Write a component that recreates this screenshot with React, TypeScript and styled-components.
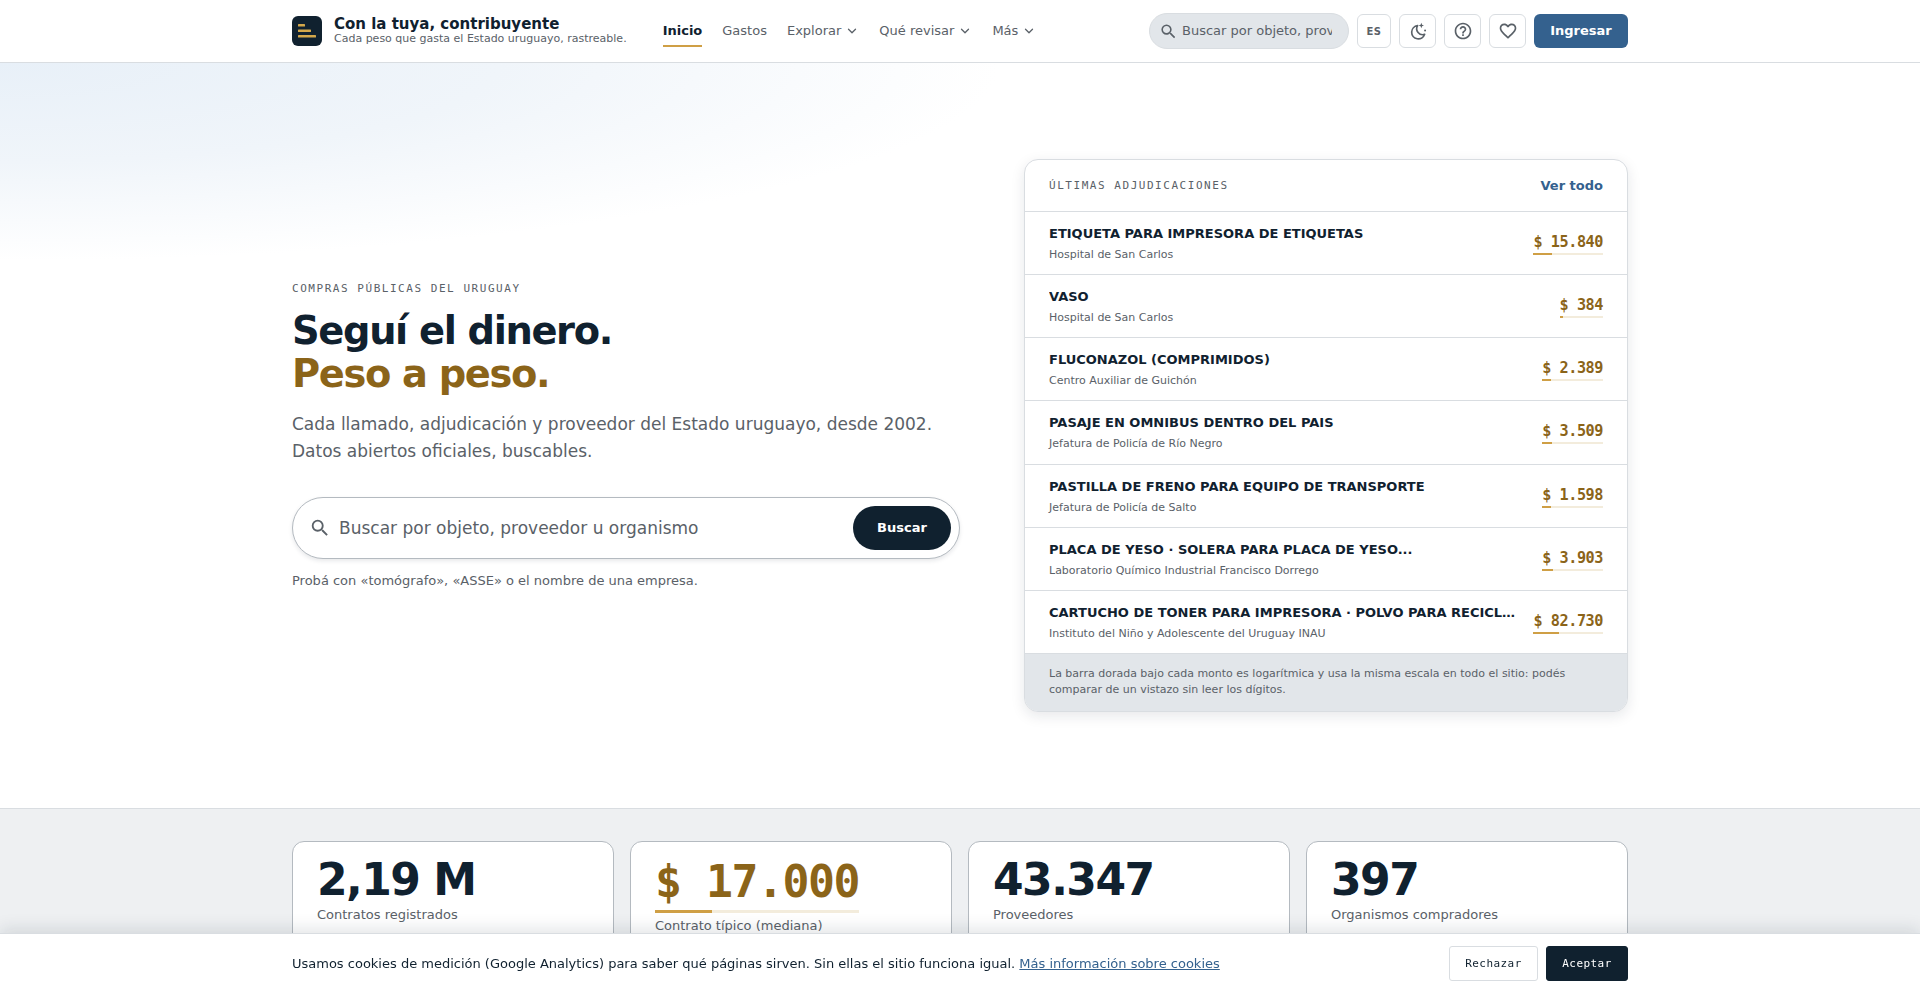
import React from "react";
import styled, { createGlobalStyle } from "styled-components";
import { ChevronDown } from "lucide-react";
import { MdSearch, MdHelpOutline, MdFavoriteBorder } from "react-icons/md";

const sans = `"DejaVu Sans", sans-serif`;
const mono = `"DejaVu Sans Mono", monospace`;
const ink = "#10212f";
const gold = "#8b6419";
const goldBar = "#cf9f45";
const goldTrack = "#f3ecdc";
const muted = "#5a6168";
const line = "#d9dde1";

const Global = createGlobalStyle`
  html, body { margin: 0; padding: 0; background: #fff; }
  body { font-family: ${sans}; color: ${ink}; }
  * { box-sizing: border-box; }
`;

const Header = styled.header`
  height: 63px;
  border-bottom: 1px solid ${line};
  background: #fff;
`;
const HeaderInner = styled.div`
  width: 1336px;
  height: 62px;
  margin: 0 auto;
  display: flex;
  align-items: center;
`;
const Brand = styled.div`
  display: flex;
  align-items: center;
  gap: 12px;
  margin-right: 36px;
`;
const LogoMark = styled.div`
  width: 30px;
  height: 30px;
  border-radius: 6px;
  background: ${ink};
  display: flex;
`;
const BrandText = styled.div`
  display: flex;
  flex-direction: column;
  padding-bottom: 1px;
`;
const BrandTitle = styled.span`
  font-size: 15px;
  font-weight: 700;
  line-height: 16px;
`;
const BrandSub = styled.span`
  font-size: 11px;
  line-height: 13px;
  color: ${muted};
`;
const Nav = styled.nav`
  display: flex;
  align-items: stretch;
  height: 62px;
  gap: 20px;
`;
const NavItem = styled.a<{ $active?: boolean }>`
  display: flex;
  align-items: center;
  gap: 4px;
  font-size: 13px;
  font-weight: ${(p) => (p.$active ? 700 : 400)};
  color: ${(p) => (p.$active ? ink : muted)};
  padding-bottom: 1px;
  position: relative;
  &::after {
    content: "";
    display: ${(p) => (p.$active ? "block" : "none")};
    position: absolute;
    left: 0;
    right: 0;
    top: 45px;
    height: 2px;
    background: ${goldBar};
  }
`;
const Tools = styled.div`
  margin-left: auto;
  display: flex;
  align-items: center;
  gap: 8px;
`;
const TopSearch = styled.div`
  width: 200px;
  height: 36px;
  border-radius: 18px;
  background: #e2e6ea;
  border: 1px solid #d9dde1;
  display: flex;
  align-items: center;
  gap: 4px;
  padding: 0 16px 0 9px;
  font-size: 13px;
  color: ${muted};
  overflow: hidden;
  white-space: nowrap;
`;
const Clip = styled.span`
  overflow: hidden;
  flex: 1;
  padding-bottom: 1px;
`;
const ToolButton = styled.button<{ $w?: number }>`
  width: ${(p) => p.$w ?? 37}px;
  height: 34px;
  padding: 0;
  border: 1px solid ${line};
  border-radius: 6px;
  background: #fff;
  color: ${muted};
  font-family: ${sans};
  font-size: 10px;
  font-weight: 700;
  letter-spacing: 0.5px;
  display: flex;
  align-items: center;
  justify-content: center;
`;
const LoginButton = styled.button`
  width: 94px;
  height: 34px;
  padding: 0 0 1px;
  border: 0;
  border-radius: 6px;
  background: #34618e;
  color: #fff;
  font-family: ${sans};
  font-size: 13px;
  font-weight: 700;
`;

const Hero = styled.section`
  height: 745px;
  background: radial-gradient(ellipse 1000px 198px at 0 0, #e8f0f8 0%, #f0f5fa 50%, rgba(255, 255, 255, 0) 100%), #fff;
  display: flex;
  align-items: center;
`;
const HeroGrid = styled.div`
  width: 1336px;
  margin: 0 auto;
  display: grid;
  grid-template-columns: 668px 604px;
  gap: 64px;
  align-items: center;
`;
const HeroLeft = styled.div`
  display: flex;
  flex-direction: column;
`;
const Eyebrow = styled.div`
  font-family: ${mono};
  font-size: 11px;
  letter-spacing: 0.14em;
  line-height: 16px;
  color: ${muted};
`;
const Headline = styled.h1`
  margin: 12px 0 0;
  font-size: 38.4px;
  font-weight: 700;
  letter-spacing: -0.035em;
  line-height: 43px;
  color: ${ink};
`;
const HeadlineGold = styled.span`
  display: block;
  color: ${gold};
`;
const Lead = styled.p`
  margin: 16px 0 0;
  font-size: 17px;
  line-height: 27px;
  color: ${muted};
`;
const BigSearch = styled.div`
  margin-top: 32px;
  height: 62px;
  width: 668px;
  border: 1px solid #b4bac0;
  border-radius: 31px;
  background: #fff;
  box-shadow: 0 2px 4px rgba(16, 33, 47, 0.1);
  display: flex;
  align-items: center;
  padding: 0 8px 0 16px;
  gap: 8px;
  font-size: 17px;
  color: ${muted};
`;
const BigPlaceholder = styled.span`
  flex: 1;
`;
const BigButton = styled.button`
  width: 98px;
  height: 44px;
  border: 0;
  border-radius: 22px;
  background: ${ink};
  color: #fff;
  font-family: ${sans};
  font-size: 13px;
  font-weight: 700;
`;
const Hint = styled.p`
  margin: 13px 0 0;
  font-size: 13px;
  line-height: 18px;
  color: ${muted};
`;

const Panel = styled.div`
  border: 1px solid ${line};
  border-radius: 14px;
  background: #fff;
  box-shadow: 0 4px 14px rgba(16, 33, 47, 0.1);
  overflow: hidden;
`;
const PanelHead = styled.div`
  height: 52px;
  padding: 0 24px;
  border-bottom: 1px solid ${line};
  display: flex;
  align-items: center;
  justify-content: space-between;
`;
const MoreLink = styled.a`
  font-size: 13px;
  font-weight: 700;
  color: #34618e;
`;
const Row = styled.div`
  height: 63.15px;
  padding: 2px 24px 0;
  border-bottom: 1px solid ${line};
  display: flex;
  align-items: center;
  justify-content: space-between;
  gap: 16px;
`;
const RowMain = styled.div`
  flex: 1;
  min-width: 0;
  display: flex;
  flex-direction: column;
  gap: 6px;
`;
const RowTitle = styled.div`
  font-size: 13px;
  font-weight: 700;
  line-height: 16px;
  color: ${ink};
  white-space: nowrap;
  overflow: hidden;
  text-overflow: ellipsis;
`;
const RowSub = styled.div`
  font-size: 11px;
  line-height: 14px;
  color: ${muted};
`;
const Amount = styled.div`
  flex: none;
  display: inline-flex;
  flex-direction: column;
  gap: 2px;
`;
const AmountText = styled.span`
  font-family: ${mono};
  font-size: 15.2px;
  font-weight: 700;
  letter-spacing: -0.03em;
  line-height: 18px;
  color: ${gold};
`;
const Track = styled.div<{ $h: number }>`
  height: ${(p) => p.$h}px;
  background: ${goldTrack};
`;
const Fill = styled.div`
  height: 100%;
  background: ${goldBar};
`;
const PanelNote = styled.div`
  background: #e2e6ea;
  padding: 12px 24px 13px;
  font-size: 11px;
  line-height: 16px;
  color: ${muted};
`;

const Stats = styled.section`
  background: #eef0f2;
  border-top: 1px solid ${line};
  padding: 32px 0 48px;
`;
const StatsGrid = styled.div`
  width: 1336px;
  margin: 0 auto;
  display: grid;
  grid-template-columns: repeat(4, 1fr);
  gap: 16px;
  align-items: start;
`;
const StatCard = styled.div`
  border: 1px solid #b4bac0;
  border-radius: 12px;
  background: #fff;
  padding: 13px 24px 16px;
  min-height: 110px;
`;
const StatValue = styled.div`
  font-size: 44px;
  font-weight: 700;
  letter-spacing: -0.035em;
  line-height: 50px;
  color: ${ink};
`;
const StatMoney = styled.div`
  display: inline-flex;
  flex-direction: column;
  gap: 3px;
  margin-top: 2px;
`;
const StatMoneyText = styled.span`
  font-family: ${mono};
  font-size: 44.8px;
  font-weight: 700;
  letter-spacing: -0.033em;
  line-height: 50px;
  color: ${gold};
`;
const StatLabel = styled.div<{ $tight?: boolean }>`
  margin-top: ${(p) => (p.$tight ? 4 : 1)}px;
  font-size: 13px;
  line-height: 18px;
  color: ${muted};
`;

const CookieBar = styled.div`
  position: fixed;
  left: 0;
  right: 0;
  bottom: 0;
  height: 60px;
  background: #fff;
  border-top: 1px solid ${line};
  box-shadow: 0 -4px 16px rgba(16, 33, 47, 0.12);
`;
const CookieInner = styled.div`
  width: 1336px;
  height: 100%;
  margin: 0 auto;
  display: flex;
  align-items: center;
  gap: 8px;
`;
const CookieText = styled.p`
  flex: 1;
  margin: 0;
  font-size: 13px;
  color: ${ink};
`;
const CookieLink = styled.a`
  color: #34618e;
  text-decoration: underline;
`;
const CookieButton = styled.button<{ $dark?: boolean }>`
  height: 35px;
  width: ${(p) => (p.$dark ? 82 : 89)}px;
  border: 1px solid ${(p) => (p.$dark ? ink : line)};
  border-radius: 3px;
  background: ${(p) => (p.$dark ? ink : "#fff")};
  color: ${(p) => (p.$dark ? "#fff" : ink)};
  font-family: ${mono};
  font-size: 11px;
  letter-spacing: 0.04em;
`;

const MoonIcon = () => (
  <svg width="20" height="20" viewBox="0 0 24 24" fill="none" stroke="currentColor" strokeWidth="2" strokeLinejoin="round">
    <path d="M11.5 5.5A8 8 0 1 0 20 16a7.2 7.2 0 0 1-8.5-10.5Z" />
    <path d="M16 2.2l.9 2.3 2.3.9-2.3.9-.9 2.3-.9-2.3-2.3-.9 2.3-.9z" fill="currentColor" stroke="none" />
    <circle cx="20.5" cy="11.5" r="1.2" fill="currentColor" stroke="none" />
  </svg>
);

const rows = [
  { t: "ETIQUETA PARA IMPRESORA DE ETIQUETAS", s: "Hospital de San Carlos", a: "$ 15.840", p: 26 },
  { t: "VASO", s: "Hospital de San Carlos", a: "$ 384", p: 7 },
  { t: "FLUCONAZOL (COMPRIMIDOS)", s: "Centro Auxiliar de Guichón", a: "$ 2.389", p: 15 },
  { t: "PASAJE EN OMNIBUS DENTRO DEL PAIS", s: "Jefatura de Policía de Río Negro", a: "$ 3.509", p: 16 },
  { t: "PASTILLA DE FRENO PARA EQUIPO DE TRANSPORTE", s: "Jefatura de Policía de Salto", a: "$ 1.598", p: 14 },
  { t: "PLACA DE YESO · SOLERA PARA PLACA DE YESO...", s: "Laboratorio Químico Industrial Francisco Dorrego", a: "$ 3.903", p: 17 },
  { t: "CARTUCHO DE TONER PARA IMPRESORA · POLVO PARA RECICLAR", s: "Instituto del Niño y Adolescente del Uruguay INAU", a: "$ 82.730", p: 37 },
];

export default function App() {
  return (
    <>
      <Global />
      <Header>
        <HeaderInner>
          <Brand>
            <LogoMark>
              <svg width="30" height="30" viewBox="0 0 30 30">
                <rect x="6" y="8" width="7" height="2.5" rx="0.6" fill="#d4a84b" />
                <rect x="6" y="13.5" width="13" height="2.5" rx="0.6" fill="#d4a84b" />
                <rect x="6" y="19" width="18" height="2.5" rx="0.6" fill="#d4a84b" />
              </svg>
            </LogoMark>
            <BrandText>
              <BrandTitle>Con la tuya, contribuyente</BrandTitle>
              <BrandSub>Cada peso que gasta el Estado uruguayo, rastreable.</BrandSub>
            </BrandText>
          </Brand>
          <Nav>
            <NavItem $active>Inicio</NavItem>
            <NavItem>Gastos</NavItem>
            <NavItem>Explorar <ChevronDown size={14} strokeWidth={2.2} /></NavItem>
            <NavItem>Qué revisar <ChevronDown size={14} strokeWidth={2.2} /></NavItem>
            <NavItem>Más <ChevronDown size={14} strokeWidth={2.2} /></NavItem>
          </Nav>
          <Tools>
            <TopSearch>
              <MdSearch size={19} style={{ flex: "none" }} />
              <Clip>Buscar por objeto, proveedor u organismo</Clip>
            </TopSearch>
            <ToolButton $w={34}>ES</ToolButton>
            <ToolButton aria-label="Tema"><MoonIcon /></ToolButton>
            <ToolButton aria-label="Ayuda"><MdHelpOutline size={20} /></ToolButton>
            <ToolButton aria-label="Favoritos"><MdFavoriteBorder size={20} /></ToolButton>
            <LoginButton>Ingresar</LoginButton>
          </Tools>
        </HeaderInner>
      </Header>
      <Hero>
        <HeroGrid>
          <HeroLeft>
            <Eyebrow>COMPRAS PÚBLICAS DEL URUGUAY</Eyebrow>
            <Headline>
              Seguí el dinero.
              <HeadlineGold>Peso a peso.</HeadlineGold>
            </Headline>
            <Lead>
              Cada llamado, adjudicación y proveedor del Estado uruguayo, desde 2002.
              <br />
              Datos abiertos oficiales, buscables.
            </Lead>
            <BigSearch>
              <MdSearch size={22} style={{ flex: "none" }} />
              <BigPlaceholder>Buscar por objeto, proveedor u organismo</BigPlaceholder>
              <BigButton>Buscar</BigButton>
            </BigSearch>
            <Hint>Probá con «tomógrafo», «ASSE» o el nombre de una empresa.</Hint>
          </HeroLeft>
          <Panel>
            <PanelHead>
              <Eyebrow>ÚLTIMAS ADJUDICACIONES</Eyebrow>
              <MoreLink>Ver todo</MoreLink>
            </PanelHead>
            {rows.map((r) => (
              <Row key={r.t}>
                <RowMain>
                  <RowTitle>{r.t}</RowTitle>
                  <RowSub>{r.s}</RowSub>
                </RowMain>
                <Amount>
                  <AmountText>{r.a}</AmountText>
                  <Track $h={2}>
                    <Fill style={{ width: `${r.p}%` }} />
                  </Track>
                </Amount>
              </Row>
            ))}
            <PanelNote>
              La barra dorada bajo cada monto es logarítmica y usa la misma escala en todo el sitio: podés
              comparar de un vistazo sin leer los dígitos.
            </PanelNote>
          </Panel>
        </HeroGrid>
      </Hero>
      <Stats>
        <StatsGrid>
          <StatCard>
            <StatValue>2,19 M</StatValue>
            <StatLabel>Contratos registrados</StatLabel>
          </StatCard>
          <StatCard>
            <StatMoney>
              <StatMoneyText>$ 17.000</StatMoneyText>
              <Track $h={3}>
                <Fill style={{ width: "28%" }} />
              </Track>
            </StatMoney>
            <StatLabel $tight>Contrato típico (mediana)</StatLabel>
          </StatCard>
          <StatCard>
            <StatValue>43.347</StatValue>
            <StatLabel>Proveedores</StatLabel>
          </StatCard>
          <StatCard>
            <StatValue>397</StatValue>
            <StatLabel>Organismos compradores</StatLabel>
          </StatCard>
        </StatsGrid>
      </Stats>
      <CookieBar>
        <CookieInner>
          <CookieText>
            Usamos cookies de medición (Google Analytics) para saber qué páginas sirven. Sin ellas el sitio funciona igual.{" "}
            <CookieLink>Más información sobre cookies</CookieLink>
          </CookieText>
          <CookieButton>Rechazar</CookieButton>
          <CookieButton $dark>Aceptar</CookieButton>
        </CookieInner>
      </CookieBar>
    </>
  );
}
